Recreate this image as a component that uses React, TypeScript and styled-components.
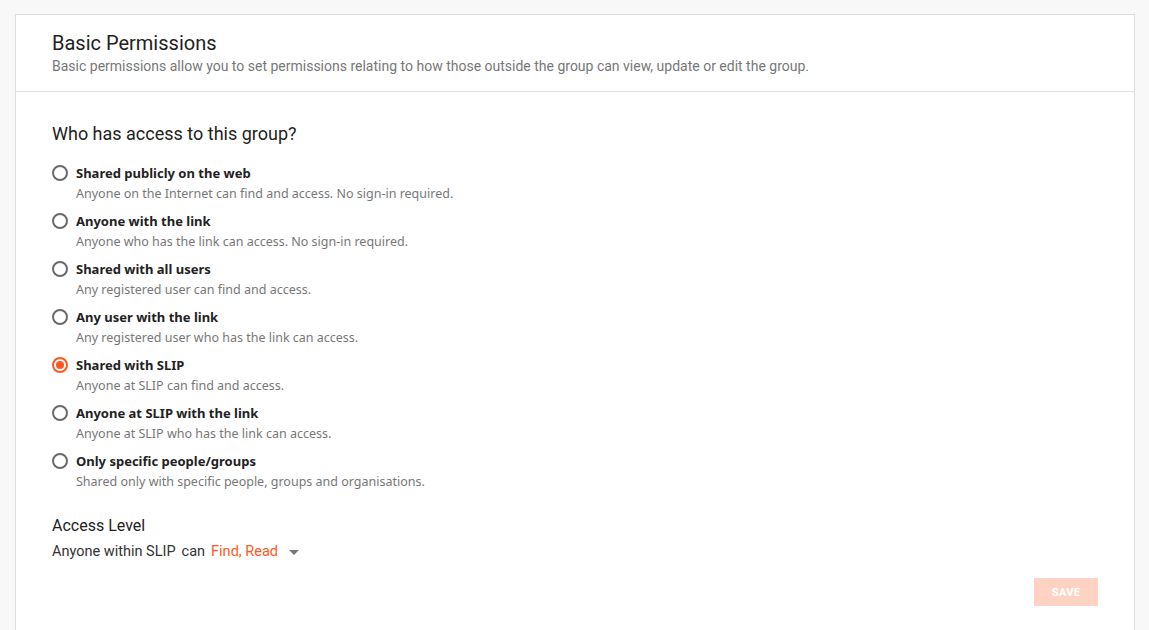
import React, { useState } from 'react';
import styled, { createGlobalStyle } from 'styled-components';

const GlobalStyle = createGlobalStyle`
  html, body {
    margin: 0;
    padding: 0;
    background: #f8f8f8;
  }
  body {
    font-family: Roboto, "Liberation Sans", sans-serif;
    color: #222;
  }
`

const Page = styled.div`
  padding: 14px 14px 0 15px;
`

const Card = styled.div`
  background: #fff;
  border: 1px solid #dedede;
  border-bottom: none;
  min-height: 620px;
`

const CardHeader = styled.div`
  padding: 15px 36px 16px;
  border-bottom: 1px solid #dedede;
`

const Title = styled.h2`
  margin: 0;
  font-size: 20px;
  font-weight: 400;
  line-height: 26px;
  color: #222;
`

const Subtitle = styled.div`
  margin-top: 1px;
  font-size: 14px;
  line-height: 18px;
  color: #777;
`

const CardBody = styled.div`
  padding: 30px 36px 24px;
`

const Question = styled.h3`
  margin: 0 0 17px;
  font-size: 18px;
  font-weight: 400;
  line-height: 24px;
  color: #222;
`

const OptionList = styled.div`
  display: flex;
  flex-direction: column;
  row-gap: 6px;
`

const Option = styled.label`
  display: flex;
  align-items: flex-start;
  column-gap: 8px;
  cursor: pointer;
`

const RadioCircle = styled.span<{ $checked: boolean }>`
  flex: none;
  box-sizing: border-box;
  width: 16px;
  height: 16px;
  margin-top: 2px;
  border-radius: 50%;
  border: 2px solid ${p => (p.$checked ? '#ff5722' : '#6a6a6a')};
  display: flex;
  align-items: center;
  justify-content: center;

  &::after {
    content: '';
    width: 8px;
    height: 8px;
    border-radius: 50%;
    background: ${p => (p.$checked ? '#ff5722' : 'transparent')};
  }
`

const OptionText = styled.div`
  display: flex;
  flex-direction: column;
  font-family: "Noto Sans", "Open Sans", sans-serif;
`

const OptionLabel = styled.span`
  font-size: 13px;
  font-weight: 700;
  line-height: 20px;
  color: #222;
`

const OptionDesc = styled.span`
  font-size: 12.5px;
  line-height: 22px;
  color: #777;
`

const AccessTitle = styled.div`
  margin-top: 21px;
  font-size: 16px;
  line-height: 24px;
  color: #222;
`

const AccessRow = styled.div`
  margin-top: 4px;
  display: flex;
  align-items: center;
  font-size: 14.5px;
  line-height: 20px;
  color: #333;
`

const Can = styled.span`
  margin: 0 6px;
`

const LevelSelect = styled.span`
  display: inline-flex;
  align-items: center;
  color: #ff5722;
  cursor: pointer;
`

const Caret = styled.span`
  margin-left: 11px;
  width: 0;
  height: 0;
  border-left: 5px solid transparent;
  border-right: 5px solid transparent;
  border-top: 5px solid #777;
`

const Footer = styled.div`
  display: flex;
  justify-content: flex-end;
  margin-top: 16px;
`

const SaveButton = styled.button`
  width: 64px;
  height: 28px;
  border: none;
  background: #ffd3c3;
  color: #fff;
  font-family: Roboto, sans-serif;
  font-size: 11px;
  font-weight: 700;
  letter-spacing: 0.3px;
  cursor: default;
`

const OPTIONS = [
  { id: 'public', label: 'Shared publicly on the web', desc: 'Anyone on the Internet can find and access. No sign-in required.' },
  { id: 'link', label: 'Anyone with the link', desc: 'Anyone who has the link can access. No sign-in required.' },
  { id: 'users', label: 'Shared with all users', desc: 'Any registered user can find and access.' },
  { id: 'userlink', label: 'Any user with the link', desc: 'Any registered user who has the link can access.' },
  { id: 'org', label: 'Shared with SLIP', desc: 'Anyone at SLIP can find and access.' },
  { id: 'orglink', label: 'Anyone at SLIP with the link', desc: 'Anyone at SLIP who has the link can access.' },
  { id: 'specific', label: 'Only specific people/groups', desc: 'Shared only with specific people, groups and organisations.' },
]

export default function App() {
  const [selected, selectedSet] = useState('org')

  return <Page>
    <GlobalStyle />
    <Card>
      <CardHeader>
        <Title>Basic Permissions</Title>
        <Subtitle>Basic permissions allow you to set permissions relating to how those outside the group can view, update or edit the group.</Subtitle>
      </CardHeader>
      <CardBody>
        <Question>Who has access to this group?</Question>
        <OptionList>
          {OPTIONS.map(opt => (
            <Option key={opt.id} onClick={() => selectedSet(opt.id)}>
              <RadioCircle $checked={selected === opt.id} />
              <OptionText>
                <OptionLabel>{opt.label}</OptionLabel>
                <OptionDesc>{opt.desc}</OptionDesc>
              </OptionText>
            </Option>
          ))}
        </OptionList>
        <AccessTitle>Access Level</AccessTitle>
        <AccessRow>
          <span>Anyone within SLIP</span>
          <Can>can</Can>
          <LevelSelect>Find, Read<Caret /></LevelSelect>
        </AccessRow>
        <Footer>
          <SaveButton>SAVE</SaveButton>
        </Footer>
      </CardBody>
    </Card>
  </Page>
}
